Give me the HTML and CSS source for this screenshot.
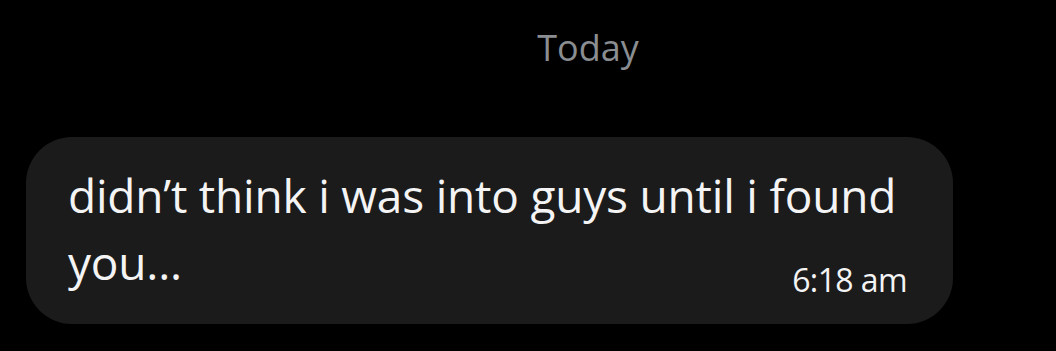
FILE: index.html
```html
<!DOCTYPE html>
<html lang="en">
<head>
    <meta charset="UTF-8">
    <meta name="viewport" content="width=device-width, initial-scale=1.0">
    <title>Chat</title>
    <link rel="stylesheet" href="styles.css">
</head>
<body>
    <div class="chat">
        <div class="day">Today</div>
        <div class="message-container">
            <div class="message">
                <div class="text">didn’t think i was into guys until i found</div>
                <div class="last-line">
                    <span class="text">you...</span>
                    <span class="time">6:18 am</span>
                </div>
            </div>
        </div>
    </div>
</body>
</html>
```

FILE: styles.css
```css
body {
    margin: 0;
    padding: 0;
    background-color: #000000;
    font-family: "Open Sans", "Noto Sans", sans-serif;
    color: #f4f4f4;
}

.chat {
    width: 1056px;
    height: 351px;
    overflow: hidden;
}

.day {
    padding: 26px 0 0 120px;
    text-align: center;
    font-size: 36px;
    line-height: 44px;
    color: #8a8d91;
}

.message-container {
    display: flex;
    padding: 67px 0 0 26px;
}

.message {
    width: 927px;
    height: 187px;
    box-sizing: border-box;
    padding: 25px 46px 0 42px;
    background-color: #1b1b1c;
    border-radius: 46px;
}

.text {
    font-size: 46px;
    line-height: 67px;
    letter-spacing: -0.2px;
}

.last-line {
    display: flex;
    justify-content: space-between;
    align-items: flex-start;
}

.time {
    margin-top: 31px;
    font-size: 32px;
    line-height: 40px;
    letter-spacing: -0.6px;
}
```
